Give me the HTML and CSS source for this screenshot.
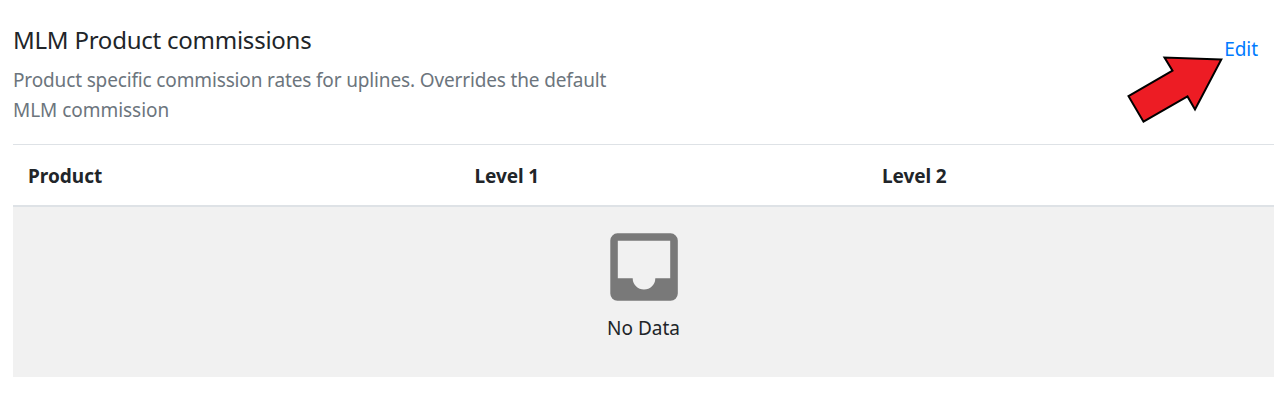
FILE: index.html
```html
<!DOCTYPE html>
<html lang="en">
<head>
<meta charset="utf-8">
<title>MLM Product commissions</title>
<link rel="stylesheet" href="styles.css">
</head>
<body>
<main class="panel">
  <header class="panel-header">
    <div class="intro">
      <h1 class="title">MLM Product commissions</h1>
      <p class="description">Product specific commission rates for uplines. Overrides the default<br><span class="description-end">MLM commission</span></p>
    </div>
    <a class="edit" href="#">Edit</a>
  </header>
  <section class="table">
    <div class="table-head">
      <div class="cell">Product</div>
      <div class="cell">Level 1</div>
      <div class="cell">Level 2</div>
    </div>
    <div class="empty">
      <svg class="inbox" viewBox="0 0 68 68"><path fill-rule="evenodd" d="M7.500 .3H60.500A7.300 7.300 0 0 1 67.800 7.500V60.500A7.300 7.300 0 0 1 60.500 67.800H7.500A7.300 7.300 0 0 1 .3 60.500V7.500A7.300 7.300 0 0 1 7.500 .3ZM7.800 7.800V45.300H22.700A11.300 11.300 0 0 0 45.300 45.300H60.200V7.800Z"/></svg>
      <div class="empty-label">No Data</div>
    </div>
  </section>
</main>
<svg class="arrow" viewBox="0 0 100 72"><path d="M95.300 4.500L38.500 2.500L46.500 15.700L2.500 41.200L17.500 66.700L61.500 41.400L69 54.500Z"/></svg>
</body>
</html>
```
FILE: styles.css
```css
* { box-sizing: border-box; }
body { margin: 0; background: #fff; color: #212529; font-family: "Noto Sans", "Open Sans", sans-serif; font-size: 19px; }
.panel { padding: 0 13px; }
.panel-header { display: flex; justify-content: space-between; height: 144px; padding-top: 25px; }
.title { margin: 0; font-size: 24px; font-weight: 400; line-height: 30px; white-space: nowrap; letter-spacing: -0.24px; }
.description { margin: 10px 0 0; color: #6c757d; line-height: 30px; white-space: nowrap; letter-spacing: -0.145px; }
.description-end { letter-spacing: -0.04px; }
.edit { margin: 9px 16px 0 0; color: #007bff; line-height: 30px; height: 30px; text-decoration: none; letter-spacing: -0.05px; }
.table-head { display: grid; grid-template-columns: 446.500px 407.500px 1fr; height: 63px; border-top: 1px solid #dee2e6; border-bottom: 2px solid #dee2e6; font-weight: 700; line-height: 62px; letter-spacing: -0.1px; }
.cell { padding-left: 15px; }
.cell:first-child { letter-spacing: 0; }
.empty { display: flex; flex-direction: column; align-items: center; height: 170px; padding-top: 26px; background: #f1f1f1; }
.inbox { width: 68px; height: 68px; fill: #797979; }
.empty-label { margin-top: 12px; line-height: 30px; }
.arrow { position: absolute; left: 1126px; top: 55px; width: 100px; height: 72px; fill: #ed1c24; stroke: #000; stroke-width: 2; }
```
